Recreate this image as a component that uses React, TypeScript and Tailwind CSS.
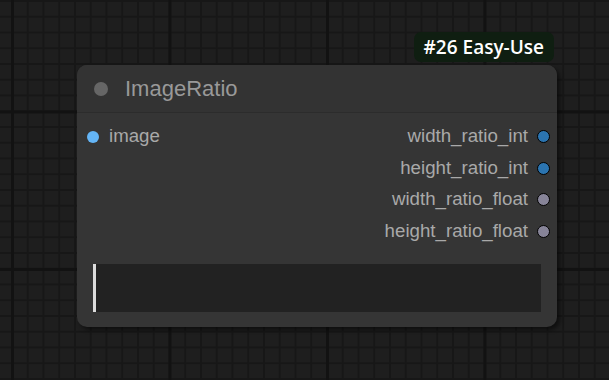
import React from 'react'

type Slot = { name: string; color: string }

const outputs: Slot[] = [
  { name: 'width_ratio_int', color: 'bg-[#2b74b0]' },
  { name: 'height_ratio_int', color: 'bg-[#2b74b0]' },
  { name: 'width_ratio_float', color: 'bg-[#878498]' },
  { name: 'height_ratio_float', color: 'bg-[#878498]' },
]

export default function App() {
  return (
    <div className="relative w-[609px] h-[380px] overflow-hidden bg-[#1e1e1e] bg-[image:linear-gradient(to_right,#121212_3px,transparent_3px),linear-gradient(to_bottom,#121212_3px,transparent_3px),linear-gradient(to_right,#171717_2px,transparent_2px),linear-gradient(to_bottom,#171717_2px,transparent_2px)] bg-size-[157.5px_157.5px,157.5px_157.5px,15.75px_15.75px,15.75px_15.75px] bg-position-[11px_0px,0px_110.5px,11px_0px,0px_0px] font-['Liberation_Sans',Arial,sans-serif]">
      {/* node */}
      <div className="absolute left-[77px] top-[32px] w-[480px] flex flex-col">
        <div className="self-end mr-[3px] h-[30px] px-[10px] flex items-center rounded-[7px] bg-[#0f1e11] text-white text-[19px] font-semibold font-['Open_Sans',sans-serif] leading-none">
          #26 Easy-Use
        </div>

        <div className="mt-[3px] h-[262px] rounded-[10px] bg-[#353535] shadow-[3px_3px_4px_rgba(0,0,0,0.5)] flex flex-col">
          {/* title */}
          <div className="h-[48px] flex items-center pl-[17px] border-b border-[#2c2c2c] bg-[#333333] rounded-t-[10px]">
            <div className="w-[14px] h-[14px] rounded-full bg-[#666666]" />
            <span className="ml-[17px] text-[22px] text-[#999999] leading-none">ImageRatio</span>
          </div>

          {/* slots */}
          <div className="pt-[8px] flex">
            <div className="flex-1 flex flex-col">
              <div className="h-[31.5px] flex items-center pl-[10px]">
                <div className="w-[12px] h-[12px] rounded-full bg-[#64b5f6]" />
                <span className="ml-[10px] text-[18.7px] text-[#a9a9a9] leading-none">image</span>
              </div>
            </div>
            <div className="flex flex-col items-end pr-[7px]">
              {outputs.map((o) => (
                <div key={o.name} className="h-[31.5px] flex items-center">
                  <span className="text-[18.7px] text-[#a9a9a9] leading-none">{o.name}</span>
                  <div className={`ml-[9px] w-[13px] h-[13px] rounded-full border-[1.5px] border-black ${o.color}`} />
                </div>
              ))}
            </div>
          </div>

          {/* text widget */}
          <div className="mt-auto mb-[15px] mx-[16px] h-[48px] bg-[#222222] border-l-[3px] border-[#dcdcdc]" />
        </div>
      </div>
    </div>
  )
}
